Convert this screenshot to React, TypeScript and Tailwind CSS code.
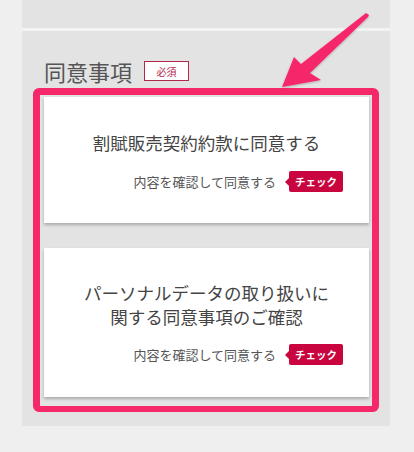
import type React from "react"

const CheckRow: React.FC = () => (
  <div className="flex items-center justify-end pr-[26px]">
    <span className="text-[13px] leading-[21px] text-[#555]">内容を確認して同意する</span>
    <span className="ml-[9px] h-0 w-0 border-y-[4px] border-r-[4px] border-y-transparent border-r-[#c8053e]" />
    <span className="flex h-[21px] items-center rounded-[2px] bg-[#c8053e] px-[6px] text-[10.5px] font-bold text-white">
      チェック
    </span>
  </div>
)

export default function App() {
  return (
    <div
      className="relative min-h-screen bg-[#efefef]"
      style={{ fontFamily: '"Noto Sans CJK JP", "Noto Sans", sans-serif' }}
    >
      <div className="ml-[22px] w-[368px]">
        <div className="h-[28px] bg-[#e3e3e3]" />
        <div className="h-[3px] bg-[#f3f3f3]" />
        <div className="bg-[#e3e3e3] pb-[14px] pt-[26px]">
          <div className="flex h-[28px] items-center px-[22px]">
            <h2 className="text-[22px] leading-[28px] text-[#555]">同意事項</h2>
            <span className="ml-[12px] flex h-[20px] w-[45px] items-center justify-center border-[1.5px] border-[#b5284d] bg-white text-[10px] text-[#b5284d]">
              必須
            </span>
          </div>

          <div className="mx-[11px] mt-[3px] rounded-[6px] border-[7px] border-b-[6px] border-[#f5286a] pb-[9px] pl-[4px] pr-[3px] pt-[2px]">
            <div className="bg-white pb-[31px] pt-[34px] shadow-[0_2px_3px_rgba(0,0,0,0.25)]">
              <p className="text-center text-[17.5px] leading-[24px] text-[#444]">割賦販売契約約款に同意する</p>
              <div className="mt-[16px]">
                <CheckRow />
              </div>
            </div>
            <div className="mt-[25px] bg-white pb-[32px] pt-[33px] shadow-[0_2px_3px_rgba(0,0,0,0.25)]">
              <p className="text-center text-[17.5px] leading-[24px] text-[#444]">
                パーソナルデータの取り扱いに
                <br />
                関する同意事項のご確認
              </p>
              <div className="mt-[15px]">
                <CheckRow />
              </div>
            </div>
          </div>
        </div>
      </div>

      <svg className="pointer-events-none absolute left-0 top-0" width="414" height="120" viewBox="0 0 414 120">
        <defs>
          <filter id="sh" x="-20%" y="-20%" width="140%" height="140%">
            <feDropShadow dx="0" dy="1" stdDeviation="1.2" floodColor="#000" floodOpacity="0.25" />
          </filter>
        </defs>
        <polygon
          points="282,87 294,57 301,64 366,13 369,15 368,17 310,73 321,80"
          fill="#f5286a"
          filter="url(#sh)"
        />
      </svg>
    </div>
  )
}
